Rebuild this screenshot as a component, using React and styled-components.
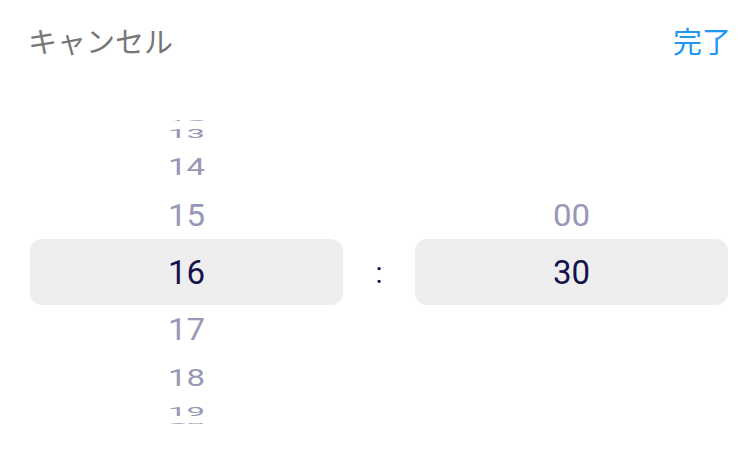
import React from 'react';
import styled, { createGlobalStyle } from 'styled-components';

const GlobalStyle = createGlobalStyle`
  body {
    margin: 0;
    background: #ffffff;
    font-family: Roboto, "Noto Sans CJK JP", sans-serif;
  }
`;

const Page = styled.div`
  width: 754px;
  height: 458px;
  box-sizing: border-box;
  padding: 0 26px 0 30px;
  overflow: hidden;
`;

const Header = styled.div`
  height: 80px;
  display: flex;
  align-items: center;
  justify-content: space-between;
`;

const HeaderButton = styled.span`
  font-family: "Noto Sans CJK JP", sans-serif;
  font-size: 29px;
  color: ${(p) => (p.primary ? '#2196f3' : '#777777')};
  margin: ${(p) => (p.primary ? '0 -3px 0 0' : '0 0 0 -2px')};
`;

const Pickers = styled.div`
  margin-top: 32px;
  display: grid;
  grid-template-columns: 1fr 72px 1fr;
`;

const Wheel = styled.div`
  height: 320px;
  display: grid;
  justify-items: stretch;
  align-items: center;
  overflow: hidden;
`;

const Highlight = styled.div`
  grid-area: 1 / 1;
  height: 66px;
  border-radius: 12px;
  background: #eeeeee;
`;

const Item = styled.div`
  grid-area: 1 / 1;
  height: 40px;
  line-height: 42px;
  text-align: center;
  font-size: 33px;
  color: ${(p) => (p.selected ? '#15124e' : '#9897b5')};
  transform-origin: center;
`;

const Colon = styled.div`
  display: flex;
  align-items: center;
  justify-content: center;
  font-size: 29px;
  color: #15124e;
  padding-top: 2px;
`;

const STEP = 22;
const RADIUS = 152;

const drum = (offset) => {
  const a = (offset * STEP * Math.PI) / 180;
  return { transform: `translateY(${RADIUS * Math.sin(a)}px) scaleY(${Math.cos(a)})` };
};

const PickerWheel = ({ values, selected }) => {
  const index = values.indexOf(selected);
  return (
    <Wheel>
      <Highlight />
      {values.map((v, i) => {
        const offset = i - index;
        if (Math.abs(offset) > 4) return null;
        return (
          <Item key={v} selected={offset === 0} style={drum(offset)}>
            {v}
          </Item>
        );
      })}
    </Wheel>
  );
};

const hours = Array.from({ length: 24 }, (_, i) => String(i));

export default function App() {
  return (
    <Page>
      <GlobalStyle />
      <Header>
        <HeaderButton>キャンセル</HeaderButton>
        <HeaderButton primary>完了</HeaderButton>
      </Header>
      <Pickers>
        <PickerWheel values={hours} selected="16" />
        <Colon>:</Colon>
        <PickerWheel values={['00', '30']} selected="30" />
      </Pickers>
    </Page>
  );
}
